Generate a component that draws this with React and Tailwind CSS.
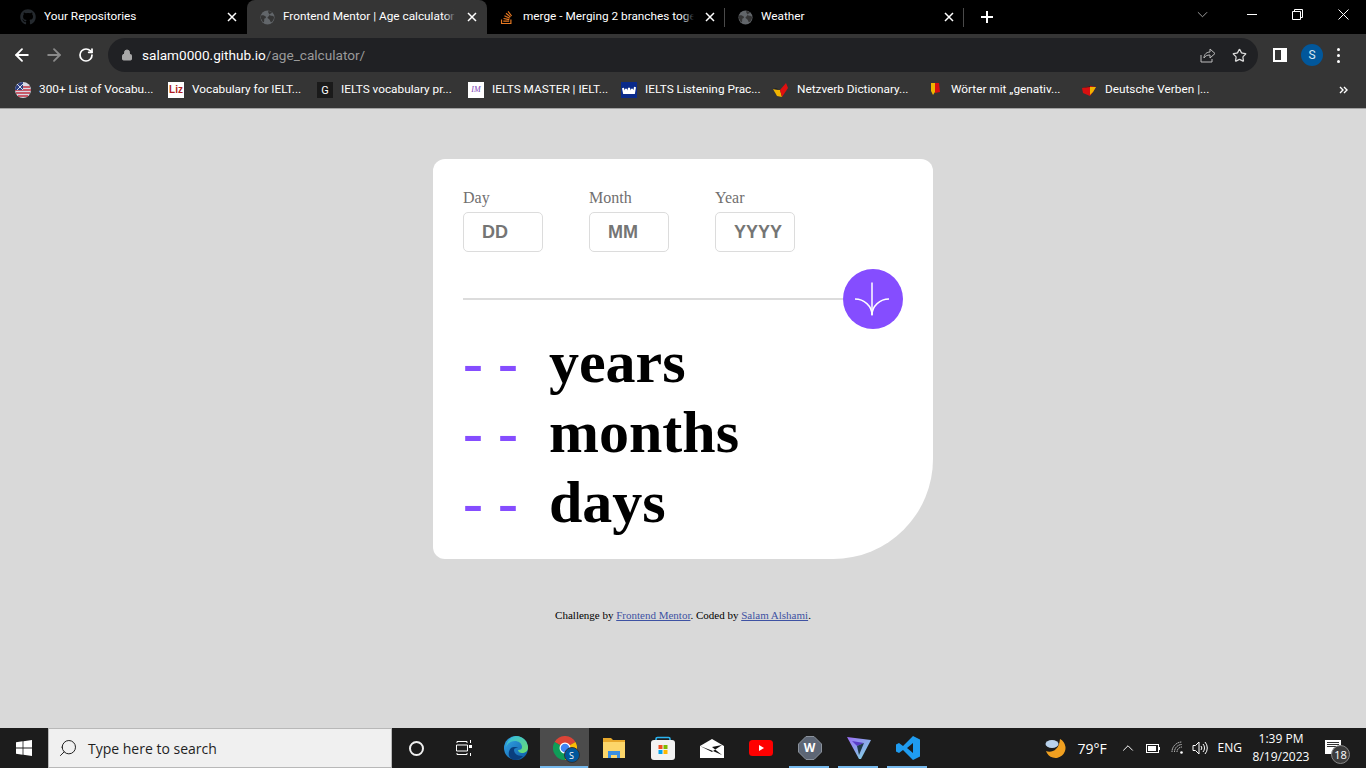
import { FaGithub, FaStackOverflow } from "react-icons/fa";
import { ArrowLeft, ArrowRight, RotateCw, Lock, Star, Search, ChevronUp } from "lucide-react";

const UI = "font-['Open_Sans','Noto_Sans',sans-serif]";
const CHROME = "font-['Roboto','Noto_Sans',sans-serif]";

function Globe({ className }) {
  return (
    <svg viewBox="0 0 16 16" className={className}>
      <circle cx="8" cy="8" r="7.5" fill="#62666a" />
      <path d="M1 6c2-1 4 0 5 1s0 2-1 2 0 3-1 4-2-3-3-4zM9 1c2 0 3 1 4 2-1 1-3 1-3 2s2 1 3 1 2 1 2 2-1 4-3 5c-1 0-1-2-2-3s-2-1-2-2 2-1 2-3-2-2-1-4z" fill="#353535" />
    </svg>
  );
}

function Close() {
  return (
    <svg viewBox="0 0 10 10" className="w-[10px] h-[10px]">
      <path d="M1 1l8 8M9 1l-8 8" stroke="#fff" strokeWidth="1.5" />
    </svg>
  );
}

function Tab({ width, icon, title, active, sep, pad = 20, gap = 8 }) {
  return (
    <div
      className={`relative h-[34px] shrink-0 flex items-center ${width} ${active ? "bg-[#353535] rounded-t-[8px]" : ""}`}
      style={{ paddingLeft: pad }}
    >
      {icon}
      <div className="relative flex-1 overflow-hidden whitespace-nowrap text-[11.8px] text-white" style={{ marginLeft: gap }}>
        {title}
        <div className={`absolute right-0 top-0 bottom-0 w-[12px] bg-gradient-to-r from-transparent ${active ? "to-[#353535]" : "to-black"}`} />
      </div>
      <div className="w-[31px] shrink-0 flex justify-center">
        <Close />
      </div>
      {sep && <div className="absolute right-0 top-[8px] h-[19px] w-px bg-[#4a4a4a]" />}
    </div>
  );
}

const bookmarks = [
  { w: "w-[114px]", t: "300+ List of Vocabu...", icon: (
    <svg viewBox="0 0 16 16" className="w-4 h-4"><circle cx="8" cy="8" r="8" fill="#d8d8e4" /><path d="M1 5h14M0 8h16M1 11h14M3 14h10" stroke="#c03040" strokeWidth="1.4" /><path d="M8 0A8 8 0 0 0 0 8h8z" fill="#2c3f80" /><path d="M2 2l6 6M8 2L2 8" stroke="#fff" strokeWidth=".8" /></svg>
  ) },
  { w: "w-[110px]", t: "Vocabulary for IELT...", icon: (
    <div className="w-4 h-4 bg-white flex items-center justify-center text-[#b01c22] text-[10px] font-bold leading-none font-['Liberation_Sans',sans-serif]">Liz</div>
  ) },
  { w: "w-[112px]", t: "IELTS vocabulary pr...", icon: (
    <div className="w-4 h-4 bg-[#1a1a1a] flex items-center justify-center text-white text-[11px] leading-none">G</div>
  ) },
  { w: "w-[114px]", t: "IELTS MASTER | IELT...", icon: (
    <div className="w-4 h-4 bg-white flex items-center justify-center text-[#7b3fb5] text-[8px] italic leading-none font-['Liberation_Serif',serif]">IM</div>
  ) },
  { w: "w-[113px]", t: "IELTS Listening Prac...", icon: (
    <svg viewBox="0 0 16 16" className="w-4 h-4"><rect width="16" height="16" fill="#0a2a8a" /><path d="M2 6l1 5h1l1-4 1 4h1l1-5 1 5h1l1-4 1 4h1l1-6" fill="none" stroke="#fff" strokeWidth="2" /></svg>
  ) },
  { w: "w-[115px]", t: "Netzverb Dictionary...", icon: (
    <svg viewBox="0 0 16 16" className="w-4 h-4"><path d="M0 7l7 1 2 7-5-1z" fill="#f0b400" /><path d="M7 8l6-7 2 5-6 9z" fill="#e01010" /><path d="M0 7l3-1 4 2z" fill="#222" /></svg>
  ) },
  { w: "w-[115px]", t: "Wörter mit „genativ...", icon: (
    <svg viewBox="0 0 16 16" className="w-4 h-4"><path d="M4 1h4v9l-2 3-2-4z" fill="#f0b400" /><path d="M8 1h4l1 9-5 1z" fill="#d81010" /></svg>
  ) },
  { w: "w-[105px]", t: "Deutsche Verben |...", icon: (
    <svg viewBox="0 0 16 16" className="w-4 h-4"><path d="M1 6l8-2 6 1-3 5-3 4-7-3z" fill="#d81010" /><path d="M9 5h6l-3 5-3 3z" fill="#f0b400" /><path d="M1 6l8-2v1z" fill="#222" /></svg>
  ) },
];

function Browser() {
  return (
    <div className={`${CHROME} shrink-0`}>
      <div className="h-[34px] bg-black flex items-center">
        <Tab width="w-[247px]" icon={<FaGithub className="w-4 h-4 text-[#24292e]" />} title="Your Repositories" />
        <Tab width="w-[240px]" active pad={13} icon={<Globe className="w-[15px] h-[15px] shrink-0" />} title="Frontend Mentor | Age calculator" />
        <Tab width="w-[238px]" sep pad={12} gap={9} icon={<FaStackOverflow className="w-[15px] h-[15px] shrink-0 text-[#e87922]" />} title="merge - Merging 2 branches together" />
        <Tab width="w-[239px]" sep pad={13} gap={8} icon={<Globe className="w-[15px] h-[15px] shrink-0" />} title="Weather" />
        <svg viewBox="0 0 12 12" className="w-3 h-3 ml-[17px]"><path d="M6 0v12M0 6h12" stroke="#fff" strokeWidth="2" /></svg>
        <div className="flex-1" />
        <svg viewBox="0 0 12 7" className="w-[11px] h-[7px] mr-[39px] -mt-[5px]"><path d="M1 1l5 5 5-5" fill="none" stroke="#aaa" strokeWidth="1" /></svg>
        <div className="w-[10px] h-px bg-white mr-[35px] -mt-[5px]" />
        <svg viewBox="0 0 11 11" className="w-[11px] h-[11px] mr-[35px] -mt-[5px]"><path d="M.5 2.5h8v8h-8zM2.5 2.5v-2h8v8h-2" fill="none" stroke="#fff" /></svg>
        <svg viewBox="0 0 11 11" className="w-[11px] h-[11px] mr-[17px] -mt-[5px]"><path d="M.5.5l10 10M10.5.5l-10 10" stroke="#fff" /></svg>
      </div>

      <div className="h-[38px] pt-[4px] bg-[#353535] flex items-center">
        <ArrowLeft className="w-[20px] h-[20px] ml-[12px] text-white" strokeWidth={2.2} />
        <ArrowRight className="w-[20px] h-[20px] ml-[12px] text-[#8a8a8a]" strokeWidth={2.2} />
        <RotateCw className="w-[16px] h-[16px] ml-[14px] text-white" strokeWidth={2.6} />
        <div className="ml-[14px] w-[1150px] h-[34px] rounded-full bg-[#202124] flex items-center">
          <Lock className="w-[12px] h-[12px] ml-[13px] text-[#a8a8a8] fill-[#a8a8a8]" />
          <div className="ml-[9px] text-[13.6px] text-white whitespace-nowrap">
            salam0000.github.io<span className="text-[#9a9a9a]">/age_calculator/</span>
          </div>
          <div className="flex-1" />
          <svg viewBox="0 0 16 16" className="w-4 h-4 mr-[16px]" fill="none" stroke="#bdbdbd" strokeWidth="1"><path d="M1 8v7h11v-3" /><path d="M4 11c0-4 3-6 6-6V2l5 4.5L10 11V8c-3 0-5 1-6 3z" /></svg>
          <Star className="w-[15px] h-[15px] mr-[11px] text-[#dcdcdc]" strokeWidth={2} />
        </div>
        <div className="ml-[15px] w-[14px] h-[14px] border-2 border-white border-r-[6px]" />
        <div className="ml-[14px] w-[22px] h-[22px] rounded-full bg-[#01579b] flex items-center justify-center text-[12px] text-[#d8e6f2]">S</div>
        <div className="ml-[14px] flex flex-col gap-[3px]">
          <div className="w-[3px] h-[3px] rounded-full bg-white" />
          <div className="w-[3px] h-[3px] rounded-full bg-white" />
          <div className="w-[3px] h-[3px] rounded-full bg-white" />
        </div>
      </div>

      <div className="h-[37px] bg-[#353535] border-b border-[#a0a0a0] flex items-center pl-[15px]">
        {bookmarks.map((b) => (
          <div key={b.t} className="flex items-center mr-[15px] shrink-0">
            {b.icon}
            <span className={`${b.w} ml-[8px] text-[11.8px] text-white whitespace-nowrap`}>{b.t}</span>
          </div>
        ))}
        <div className="flex-1" />
        <svg viewBox="0 0 9 8" className="w-[9px] h-2 mr-[18px]"><path d="M1 1l3 3-3 3M5 1l3 3-3 3" fill="none" stroke="#fff" strokeWidth="1.4" /></svg>
      </div>
    </div>
  );
}

function Field({ label, placeholder }) {
  return (
    <label className="block w-[80px]">
      <span className="block text-[16px] leading-[18px] text-[#716f6f] mb-[5px]">{label}</span>
      <input
        readOnly
        placeholder={placeholder}
        className="block w-[80px] h-[40px] border border-[#dcdcdc] rounded-[5px] pl-[18px] bg-white font-['Liberation_Sans',sans-serif] font-bold text-[18px] placeholder:text-[#757575] outline-none"
      />
    </label>
  );
}

function Result({ word }) {
  return (
    <div className="flex text-[60px] leading-[70px] font-bold text-black whitespace-pre">
      <span className="text-[#854dff] mr-[31px]">- -</span>
      <span>{word}</span>
    </div>
  );
}

function Card() {
  return (
    <div className="w-[500px] h-[400px] bg-white rounded-[12px] rounded-br-[100px] px-[30px] pt-[30px]">
      <div className="flex gap-[46px]">
        <Field label="Day" placeholder="DD" />
        <Field label="Month" placeholder="MM" />
        <Field label="Year" placeholder="YYYY" />
      </div>
      <div className="flex items-center mt-[17px] mb-[-2px]">
        <div className="flex-1 h-[2px] -mt-px bg-[#dcdcdc]" />
        <button className="w-[60px] h-[60px] rounded-full bg-[#854dff] flex items-center justify-center">
          <svg viewBox="0 0 36 36" className="w-[36px] h-[36px] -ml-[3px] -mt-[1px]" fill="none" stroke="#fff" strokeWidth="1.5">
            <path d="M18 1.5v33" />
            <path d="M1 18c9 0 17 7 17 16 0-9 8-16 17-16" />
          </svg>
        </button>
      </div>
      <Result word="years" />
      <Result word="months" />
      <Result word="days" />
    </div>
  );
}

function Slot({ children, active, under }) {
  return (
    <div className={`relative w-[49px] h-[40px] flex items-center justify-center ${active ? "bg-[#4c4c4c]" : ""}`}>
      {children}
      {under && <div className={`absolute bottom-0 h-[2px] bg-[#76b9ed] ${active ? "left-0 w-[48px]" : "left-[4px] w-[40px]"}`} />}
    </div>
  );
}

function Taskbar() {
  return (
    <div className={`${UI} h-[40px] shrink-0 bg-[#1c1c1c] flex items-center text-white`}>
      <div className="w-[48px] flex justify-center">
        <svg viewBox="0 0 16 16" className="w-4 h-4" fill="#fff"><path d="M0 2.2l6.6-.9v6.3H0zM7.4 1.2L16 0v7.6H7.4zM0 8.4h6.6v6.3L0 13.8zM7.4 8.4H16V16l-8.6-1.2z" /></svg>
      </div>
      <div className="w-[344px] h-[40px] bg-[#f0f0f0] border border-[#b8b8b8] flex items-center text-[#1f1f1f]">
        <Search className="w-[20px] h-[20px] ml-[9px] -scale-x-100 text-[#222]" strokeWidth={1.2} />
        <span className="ml-[10px] text-[14px]">Type here to search</span>
      </div>
      <div className="w-[48px] flex justify-center">
        <div className="w-[15px] h-[15px] rounded-full border-2 border-[#f0f0f0]" />
      </div>
      <div className="w-[47px] flex justify-center">
        <svg viewBox="0 0 16 16" className="w-4 h-4" fill="none" stroke="#fff">
          <path d="M1 3V1.5h10V3M1 13v1.5h10V13M.5 5h11v6H.5zM14.5 0v3M14.5 13v3" />
          <rect x="13" y="5" width="3" height="3" fill="#fff" stroke="none" />
        </svg>
      </div>
      <div className="w-[4px]" />
      <Slot>
        <svg viewBox="0 0 24 24" className="w-6 h-6">
          <defs>
            <linearGradient id="ed" x1="0" y1="0" x2="1" y2="1"><stop offset="0" stopColor="#35a8e8" /><stop offset="1" stopColor="#0c59a4" /></linearGradient>
            <linearGradient id="edg" x1="0" y1="0" x2="1" y2="1"><stop offset="0" stopColor="#2fb8e8" /><stop offset="1" stopColor="#6fe06a" /></linearGradient>
          </defs>
          <circle cx="12" cy="12" r="12" fill="url(#ed)" />
          <path d="M12 0a12 12 0 0 1 12 12c0 3-3 5-6 5-2 0-4-1-4-3 3 0 4-1 4-3 0-4-4-6-7-6-4 0-7 2-9 6C3 5 7 0 12 0z" fill="url(#edg)" />
          <path d="M10 14c0 3 3 6 8 6l1 0c-2 2-4 4-8 4C8 24 6 22 5 20c-1-4 1-9 5-9 2 0 3 0 4 1-2 0-4 0-4 2z" fill="#0a3f7e" />
        </svg>
      </Slot>
      <Slot active under>
        <div className="relative w-6 h-6">
          <svg viewBox="0 0 24 24" className="w-6 h-6">
            <path d="M12 12L1.6 6A12 12 0 0 1 22.4 6z" fill="#db4437" />
            <path d="M12 12l10.4-6A12 12 0 0 1 12 24z" fill="#fbbc05" />
            <path d="M12 12v12A12 12 0 0 1 1.6 6z" fill="#0f9d58" />
            <circle cx="12" cy="12" r="5.5" fill="#fff" /><circle cx="12" cy="12" r="4.3" fill="#4285f4" />
          </svg>
          <div className="absolute -right-[3px] -bottom-[3px] w-[16px] h-[16px] rounded-full bg-[#01579b] border border-[#333] flex items-center justify-center text-[9px] leading-none">S</div>
        </div>
      </Slot>
      <Slot>
        <svg viewBox="0 0 22 20" className="w-[22px] h-5"><path d="M0 0h8l2 2h12v4H0z" fill="#e8a92c" /><path d="M0 4h22v16H0z" fill="#fcd66a" /><path d="M5 20v-7h12v7h-3v-3H8v3z" fill="#3a8ee0" /></svg>
      </Slot>
      <Slot>
        <svg viewBox="0 0 24 24" className="w-6 h-6"><path d="M5 7V3a1.5 1.5 0 0 1 1.5-1.5h11A1.5 1.5 0 0 1 19 3v4" fill="none" stroke="#2bb4f0" strokeWidth="1.6" /><rect y="4" width="24" height="20" rx="3" fill="#f3f3f3" /><rect x="7.5" y="9" width="4" height="4" fill="#f25022" /><rect x="12.5" y="9" width="4" height="4" fill="#7fba00" /><rect x="7.5" y="14" width="4" height="4" fill="#00a4ef" /><rect x="12.5" y="14" width="4" height="4" fill="#ffb900" /></svg>
      </Slot>
      <Slot>
        <svg viewBox="0 0 24 19" className="w-6 h-[19px]"><path d="M0 7l12-7 12 7v12H0z" fill="#fff" /><path d="M0 7l13 5 9-6-10 2 10 8-9-4-1 1z" fill="#111" /></svg>
      </Slot>
      <Slot>
        <svg viewBox="0 0 24 16" className="w-6 h-4"><rect width="24" height="16" rx="3.5" fill="#f00" /><path d="M10 5l5 3-5 3z" fill="#fff" /></svg>
      </Slot>
      <Slot under>
        <div className="relative w-6 h-6 flex items-center justify-center">
          <svg viewBox="0 0 24 24" className="absolute inset-0 w-6 h-6"><path d="M8 .5h8L23.5 8v8L16 23.5H8L.5 16V8z" fill="#5d6675" stroke="#8b929c" /></svg>
          <span className="relative text-[12px] font-bold leading-none">W</span>
        </div>
      </Slot>
      <Slot under>
        <svg viewBox="0 0 24 24" className="w-6 h-6">
          <defs><linearGradient id="vp" x1="0" y1="0" x2="1" y2="1"><stop offset="0" stopColor="#9a6cf5" /><stop offset="1" stopColor="#7fe0e0" /></linearGradient></defs>
          <path d="M0 1l24 3-10 19h-2z" fill="url(#vp)" />
          <path d="M5 5l12 2-7 3z" fill="#5a3cc8" />
          <path d="M10 10l7-3-5 12z" fill="#1f3a4a" />
        </svg>
      </Slot>
      <Slot under>
        <svg viewBox="0 0 24 24" className="w-6 h-6"><path d="M17 0l7 3.5v17L17 24 7 14l-4 3-3-1.5v-7L3 7l4 3zm0 7l-6 5 6 5z" fill="#1f9cf0" fillRule="evenodd" /></svg>
      </Slot>
      <div className="flex-1" />
      <svg viewBox="0 0 22 22" className="w-[22px] h-[22px] mr-[11px]">
        <path d="M15 2a10 10 0 1 1-14 12c5 2 13 0 14-12z" fill="#f0a020" />
        <ellipse cx="7" cy="7" rx="6.5" ry="4" fill="#b9d2ec" />
      </svg>
      <span className="text-[14px] w-[39px]">79°F</span>
      <ChevronUp className="w-[18px] h-[18px] mr-[9px] ml-[2px]" strokeWidth={1.3} />
      <div className="flex items-center mr-[11px]">
        <div className="w-[13px] h-[9px] border border-white p-px"><div className="w-[8px] h-full bg-white" /></div>
        <div className="w-px h-[3px] bg-white" />
      </div>
      <svg viewBox="0 0 14 14" className="w-[14px] h-[14px] mr-[7px]" fill="none" stroke="#d0d0d0" strokeWidth="1" strokeDasharray="1.5 .7">
        <path d="M1 11a10 10 0 0 1 10-10M3.5 11A7.5 7.5 0 0 1 11 3.5M6 11a5 5 0 0 1 5-5" />
        <circle cx="10.5" cy="11.5" r="1.3" fill="#fff" stroke="none" />
      </svg>
      <svg viewBox="0 0 16 16" className="w-4 h-4 mr-[10px]" fill="none" stroke="#fff" strokeWidth="1">
        <path d="M1 5.5h2.5L7 2v12l-3.5-3.5H1zM9 6a3 3 0 0 1 0 4M11 4a6 6 0 0 1 0 8M13 2a9 9 0 0 1 0 12" />
      </svg>
      <span className="text-[12px] mr-[7px]">ENG</span>
      <div className="w-[64px] text-center text-[12px] leading-[18px] mr-[10px] whitespace-nowrap">
        <div>1:39 PM</div>
        <div>8/19/2023</div>
      </div>
      <div className="relative w-[43px] h-[40px]">
        <div className="absolute left-[2px] top-[12px] w-[16px] h-[14px] bg-white flex flex-col gap-px p-[2px]">
          <div className="h-px bg-[#333]" /><div className="h-px bg-[#333]" /><div className="h-px bg-[#333]" />
        </div>
        <div className="absolute left-[8px] top-[17px] w-[19px] h-[19px] rounded-full bg-[#3c3c3c] border border-[#888] flex items-center justify-center text-[11px] leading-none">18</div>
      </div>
    </div>
  );
}

export default function App() {
  return (
    <div className="w-[1366px] h-[768px] overflow-hidden flex flex-col bg-[#d9d9d9]">
      <Browser />
      <main className="flex-1 flex flex-col items-center pt-[50px] font-['Liberation_Serif',serif]">
        <Card />
        <p className="mt-[50px] text-[11px] leading-[13px] text-black">
          Challenge by <a href="#" className="text-[#3e52a3] underline">Frontend Mentor</a>. Coded by{" "}
          <a href="#" className="text-[#3e52a3] underline">Salam Alshami</a>.
        </p>
      </main>
      <Taskbar />
    </div>
  );
}
